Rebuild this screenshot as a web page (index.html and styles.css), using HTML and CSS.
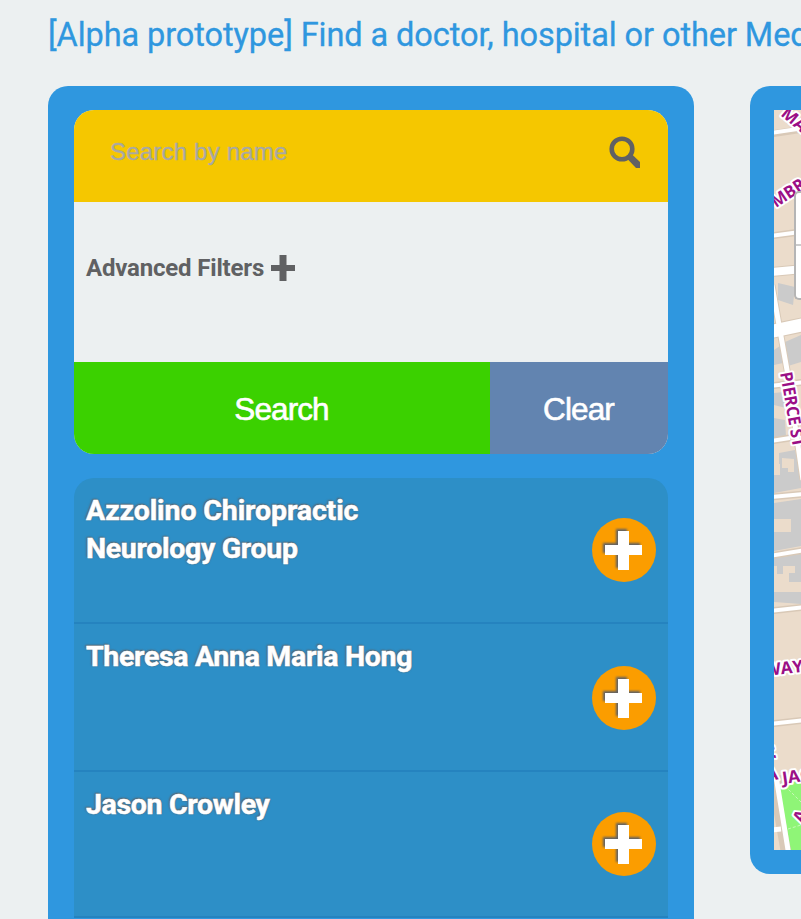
FILE: index.html
```html
<!DOCTYPE html>
<html lang="en">
<head>
<meta charset="utf-8">
<title>Find a doctor</title>
<link rel="stylesheet" href="styles.css">
</head>
<body>
<h1 class="title">[Alpha prototype] Find a doctor, hospital or other Med</h1>
<main class="columns">
  <section class="panel finder">
    <form class="search">
      <label class="query">
        <span class="placeholder">Search by name</span>
        <svg class="magnifier" width="32" height="34" viewBox="0 0 32 34"><circle cx="13" cy="14" r="10.3" fill="none" stroke="#606163" stroke-width="4.6"/><path d="M17 22.500 21.500 18 31 27V33H27Z" fill="#606163"/></svg>
      </label>
      <div class="filters"><span class="filters-label">Advanced Filters</span><svg class="filters-plus" width="24" height="26" viewBox="0 0 24 26"><path d="M8.500 0h7v10H24v6h-8.500v10h-7V16H0v-6h8.500Z" fill="#606163"/></svg></div>
      <div class="actions"><button class="btn go" type="button"><span>Search</span></button><button class="btn clear" type="button"><span>Clear</span></button></div>
    </form>
    <ul class="results">
      <li class="result"><span class="name"><span class="wide">Azzolino Chiropractic</span><br>Neurology Group</span><span class="add"><svg width="37" height="39" viewBox="0 0 37 39"><path d="M13 0h11v14h13v10H24v15H13V24H0V14h13Z" fill="#fff"/></svg></span></li>
      <li class="result tall"><span class="name">Theresa Anna Maria Hong</span><span class="add"><svg width="37" height="39" viewBox="0 0 37 39"><path d="M13 0h11v14h13v10H24v15H13V24H0V14h13Z" fill="#fff"/></svg></span></li>
      <li class="result"><span class="name">Jason Crowley</span><span class="add"><svg width="37" height="39" viewBox="0 0 37 39"><path d="M13 0h11v14h13v10H24v15H13V24H0V14h13Z" fill="#fff"/></svg></span></li>
    </ul>
  </section>
  <section class="panel map-panel">
    <div class="map">
      <svg width="27" height="740" viewBox="774 110 27 740">
        <rect x="774" y="110" width="27" height="740" fill="#ebdccb"/>
        <g fill="#cbcbcb">
          <path d="M778 283 795 287 793 305 778 300Z"/>
          <path d="M785 342 801 335V362L788 366Z"/>
          <path d="M774 350 780 346 783 363 774 365Z"/>
          <path d="M774 393 784 392 786 408 774 405Z"/>
          <path d="M774 418 785 420 786 436 774 438Z"/>
          <path d="M779 453 795 450 801 475V488L774 493V475H780V464H779ZM782 458V468H788V472H794V459Z" fill-rule="evenodd"/>
          <path d="M774 503 801 499V546L774 551V532H791V519H774Z"/>
          <path d="M774 558 788 556 801 553V582H789V573H795V566H783V574H777V566H774ZM774 592 801 592V604L774 602Z"/>
        </g>
        <g fill="none" stroke="#d9c9b7">
          <path d="M770 134 805 129M770 236 800 232M770 386 805 382M770 441 790 438M770 497 805 494M770 556 805 550M770 611 805 607M770 724 805 720" stroke-width="7"/>
          <path d="M772 285 779 325 787 370 803 480" stroke-width="7"/>
          <path d="M770 272 805 269" stroke-width="10"/>
          <path d="M768 332 807 324" stroke-width="15"/>
          <path d="M775 776 789 856" stroke-width="15"/>
        </g>
        <g fill="none" stroke="#fff">
          <path d="M770 133 805 128M770 236 800 232M770 386 805 382M770 441 790 438M770 497 805 494M770 556 805 550M770 611 805 607M770 724 805 720" stroke-width="4"/>
          <path d="M772 285 779 325 787 370 803 480" stroke-width="5"/>
          <path d="M770 272 805 269" stroke-width="8"/>
          <path d="M768 332 807 324" stroke-width="13"/>
        </g>
        <path d="M779 786 801 772V850H791Z" fill="#8ff577"/>
        <path d="M785 786 801 802M788 829 801 825" fill="none" stroke="#c9f8b8" stroke-dasharray="3 2"/>
        <path d="M776 776 789 856M770 830 781 829" fill="none" stroke="#fff" stroke-width="5"/>
        <g class="streets">
          <text transform="translate(780 115) rotate(40)">MA</text>
          <text transform="translate(776 208) rotate(-34)" textLength="37" lengthAdjust="spacingAndGlyphs">MBR</text>
          <text transform="translate(780 373) rotate(80)" textLength="76" lengthAdjust="spacingAndGlyphs">PIERCE ST</text>
          <text transform="translate(765 676) rotate(-6)">WAY</text>
          <text transform="translate(776 758) rotate(-100)">A</text>
          <text transform="translate(767 781) rotate(-8)">A</text>
          <text transform="translate(783 784) rotate(-8)" textLength="29" lengthAdjust="spacingAndGlyphs">JAC</text>
          <text transform="translate(803 824) rotate(-65)">A</text>
        </g>
      </svg>
      <div class="zoom"><span class="zoom-in"></span><span class="zoom-out"></span></div>
    </div>
  </section>
</main>
</body>
</html>
```
FILE: styles.css
```css
* { box-sizing: border-box; }
html, body { overflow: hidden; }
body {
  margin: 0;
  width: 801px;
  height: 919px;
  background: #ecf0f1;
  font-family: Roboto, "Liberation Sans", sans-serif;
}
.title {
  margin: 0;
  height: 86px;
  padding: 14px 0 0 48px;
  font-size: 32.5px;
  line-height: 42px;
  font-weight: 400;
  letter-spacing: -0.08px;
  white-space: nowrap;
  color: #2f97df;
  -webkit-text-stroke: 0.3px #2f97df;
}
.columns { display: flex; gap: 56px; padding-left: 48px; align-items: flex-start; }
.panel { flex: none; background: #2f97df; border-radius: 20px; }
.finder { width: 646px; height: 833px; padding: 24px 26px 0; border-radius: 20px 20px 0 0; }
.search { height: 344px; border-radius: 20px; overflow: hidden; background: #ecf0f1; }
.query {
  display: flex;
  justify-content: space-between;
  height: 92px;
  padding: 25px 27px 0 36px;
  background: #f5c700;
}
.placeholder {
  font: 24px/34px "Liberation Sans", sans-serif;
  letter-spacing: 0.2px;
  color: #a8a8a4;
  -webkit-text-stroke: 0.4px #a8a8a4;
}
.filters {
  display: flex;
  height: 160px;
  padding: 53px 12px 0;
  color: #606163;
}
.filters-label { width: 185px; font-size: 24px; line-height: 26px; font-weight: 700; letter-spacing: -0.18px; white-space: nowrap; }
.actions { display: flex; height: 92px; }
.btn {
  border: 0;
  padding: 1px 1px 0 0;
  color: #fff;
  font: 31.5px/36px "Liberation Sans", sans-serif;
  letter-spacing: -0.9px;
  -webkit-text-stroke: 0.6px #fff;
}
.go { width: 416px; background: #3bd100; }
.clear { width: 178px; background: #6284b0; }
.results {
  margin: 24px 0 0;
  padding: 0;
  list-style: none;
  border-radius: 20px 20px 0 0;
  overflow: hidden;
  background: #2d8fc7;
}
.result {
  display: flex;
  justify-content: space-between;
  height: 146px;
  padding: 14px 12px 0;
  border-bottom: 2px solid #2583bf;
}
.tall { height: 148px; }
.name {
  font-size: 28.5px;
  line-height: 38px;
  font-weight: 700;
  letter-spacing: -0.32px;
  color: #fff;
  -webkit-text-stroke: 0.5px #fff;
  text-shadow: -1px -1px 2px #606163, 0 0 2px #606163;
}
.wide { letter-spacing: -0.12px; }
.add {
  display: flex;
  align-items: center;
  justify-content: center;
  width: 64px;
  height: 64px;
  margin-top: 26px;
  padding-right: 1px;
  border-radius: 50%;
  background: #fb9d00;
}
.tall .add { margin-top: 28px; }
.add svg { filter: drop-shadow(-1.5px -1.5px 1px #606163); overflow: visible; }
.map-panel { width: 51px; height: 788px; padding: 24px 0 24px 24px; border-radius: 20px 0 0 20px; }
.map { position: relative; height: 740px; overflow: hidden; background: #ebdccb; }
.map > svg { display: block; }
.streets text {
  font: 700 17px "Open Sans", sans-serif;
  fill: #9b0f86;
  stroke: #fff;
  stroke-width: 4px;
  stroke-linejoin: round;
  paint-order: stroke;
}
.zoom {
  position: absolute;
  left: 20px;
  right: 0;
  top: 81px;
  height: 109px;
  border: 2px solid #b5b5b5;
  border-right: 0;
  border-radius: 5px 0 0 5px;
  background: #fff;
}
.zoom span { display: block; height: 53px; }
.zoom-in { border-bottom: 2px solid #ccc; }
```
